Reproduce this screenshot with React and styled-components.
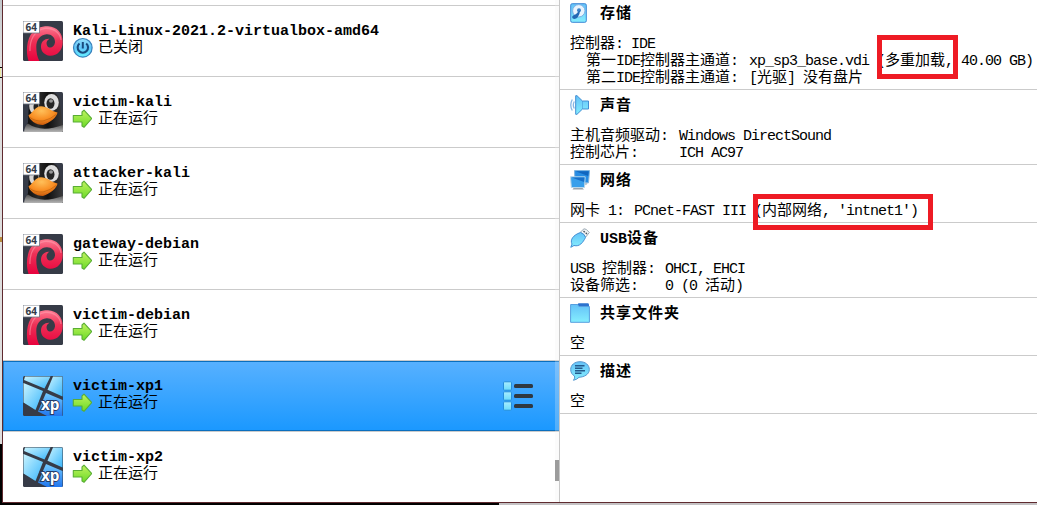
import React from "react";
import styled, { createGlobalStyle, css } from "styled-components";

const GlobalStyle = createGlobalStyle`
  *, *::before, *::after { box-sizing: border-box; }
  body { margin: 0; background: #fff; }
`;

const Desktop = styled.div`
  width: 1037px;
  height: 505px;
  overflow: hidden;
  padding: 0 0 2px 2px;
  background:
    linear-gradient(#000, #000) 0 444px / 3px 61px no-repeat,
    linear-gradient(#000, #000) 0 503px / 499px 2px no-repeat,
    linear-gradient(#000, #000) 0 67px / 2px 1px no-repeat,
    linear-gradient(#e9eaa5, #e9eaa5) 0 68px / 1px 9px no-repeat,
    linear-gradient(#000, #000) 0 77px / 2px 1px no-repeat,
    linear-gradient(#b78b3c, #b78b3c) 0 237px / 2px 5px no-repeat,
    linear-gradient(#c4c2c4, #c4c2c4) 499px 503px / 538px 2px no-repeat,
    linear-gradient(#c3c8cc 0, #dedede 60px, #dedede 444px);
`;

const Window = styled.main`
  display: flex;
  height: 503px;
  overflow: hidden;
  border-left: 1px solid #5f2a2f;
  border-bottom: 1px solid #5f2a2f;
  background: #fff;
  color: #000;
  font-family: "Noto Sans CJK SC", sans-serif;
  font-size: 15px;
`;

const Latin = styled.span`
  font-family: "Liberation Mono", monospace;
  letter-spacing: ${(p) => (p.$bold ? 0 : "-1px")};
`;
const Han = styled.span`
  font-weight: ${(p) => (p.$bold ? 700 : 400)};
  letter-spacing: ${(p) => (p.$bold ? "1px" : 0)};
`;

/* Splits a string into Latin and Chinese runs so each keeps its fixed advance. */
function Mixed({ children, bold }) {
  return children
    .split(/([\u3400-\u9fff]+)/)
    .filter(Boolean)
    .map((run, i) =>
      /[\u3400-\u9fff]/.test(run) ? (
        <Han key={i} $bold={bold}>{run}</Han>
      ) : (
        <Latin key={i} $bold={bold}>{run}</Latin>
      )
    );
}

const Sidebar = styled.div`
  display: flex;
  flex: none;
  flex-direction: column;
  position: relative;
  width: 557px;
  border-right: 1px solid #c8c8c8;
  padding-top: 5px;
`;
const MachineList = styled.ul`
  list-style: none;
  margin: 0;
  padding: 0;
  border-top: 1px solid #cbcbcb;
`;
const MachineRow = styled.li`
  display: flex;
  align-items: flex-start;
  height: 71px;
  padding: 15px 25px 0 20px;
  border-bottom: 1px solid #cbcbcb;
  ${(p) => p.$last && css`border-bottom: 0;`}
  ${(p) =>
    p.$selected &&
    css`
      background: linear-gradient(#58b1ff, #1a98ff) padding-box;
      box-shadow: inset 0 1px #0a6ebd, inset 0 -1px #0a6ebd, inset 1px 0 #1c7fcb;
    `}
`;
const MachineText = styled.div`
  flex: 1;
  margin-left: 9px;
`;
const MachineName = styled.div`
  height: 17px;
  padding-left: 1px;
  font-family: "Liberation Mono", monospace;
  line-height: 21px;
  font-weight: 700;
  white-space: pre;
`;
const MachineState = styled.div`
  display: flex;
  gap: 6px;
  height: 20px;
  line-height: 15px;
  white-space: pre;
`;
const MenuButton = styled.button`
  display: block;
  width: 32px;
  height: 32px;
  margin: 4px 0 0;
  padding: 0;
  border: 0;
  background: none;
`;
const ScrollTrack = styled.div`
  position: absolute;
  top: 0;
  right: 0;
  bottom: 0;
  width: 4px;
  padding-top: 460px;
  background: rgba(240, 240, 240, 0.25);
`;
const ScrollThumb = styled.div`
  height: 21px;
  background: #9c9c9c;
`;

const Details = styled.div`
  flex: 1;
  min-width: 0;
  margin-top: -2px;
`;
const Section = styled.section`
  padding: 5px 0 5px 10px;
  border-bottom: 1px solid #cbcbcb;
`;
const SectionHeader = styled.header`
  display: flex;
  gap: 10px;
  height: 20px;
  margin-bottom: 10px;
`;
const SectionTitle = styled.h2`
  margin: 0;
  font-size: 15px;
  line-height: 17px;
  white-space: pre;
`;
const Line = styled.div`
  display: flex;
  height: 17px;
  line-height: 17px;
  padding-left: ${(p) => (p.$indent ? 16 : 0)}px;
  white-space: pre;
`;
const Label = styled.span`
  flex: none;
  width: ${(p) => (p.$width ? `${p.$width}px` : "auto")};
`;
const Value = styled.span`
  flex: none;
`;
const Highlight = styled.div`
  position: absolute;
  left: ${(p) => p.$x}px;
  top: ${(p) => p.$y}px;
  width: ${(p) => p.$w}px;
  height: ${(p) => p.$h}px;
  border: 5px solid #ee1b24;
`;
const Icon = styled.svg`
  display: block;
  flex: none;
`;

function Badge64() {
  return (
    <g>
      <path d="M0 0H16.500V12H0Z" fill="#fff" stroke="#6d7480" strokeWidth=".8" />
      <text x="2.6" y="9.8" fontFamily="Open Sans, sans-serif" fontSize="10" fontWeight="700" fill="#333b49">64</text>
    </g>
  );
}

function DebianIcon() {
  return (
    <Icon width="40" height="40" viewBox="0 0 40 40">
      <defs>
        <linearGradient id="swirl" x1="0" y1="0" x2="0" y2="1">
          <stop offset="0" stopColor="#ff7a92" />
          <stop offset=".4" stopColor="#ee3257" />
          <stop offset="1" stopColor="#e7003c" />
        </linearGradient>
        <clipPath id="osClip"><rect width="40" height="40" rx="1.5" /></clipPath>
      </defs>
      <g clipPath="url(#osClip)">
        <rect width="40" height="40" fill="#363b47" />
        <path
          d="M6 41C3 34 3 22 7.500 14C12 7.500 18 5.200 25 5.300C34 5.800 39.700 12 39.700 21C39.700 29.500 34 35 27 34.800C21 34.500 17.500 29.500 18 25C18.400 20.500 21.500 17.500 26.500 17.800C23.500 19.500 22.800 22.500 24.300 25C26.500 28 31.200 26.500 32 21.500C32.300 16.500 28.500 13 23.500 13.300C17 13.800 13.300 19 13.300 26C13.300 32 14.500 37 17 41Z"
          fill="url(#swirl)"
        />
        <path d="M7 30C6.500 20 11 9 22 7.300C31 6.800 37 12 38 19" fill="none" stroke="#ffa2b2" strokeOpacity=".5" strokeWidth="1.3" />
      </g>
      <Badge64 />
    </Icon>
  );
}

function TuxIcon() {
  return (
    <Icon width="40" height="40" viewBox="0 0 40 40">
      <defs>
        <radialGradient id="beak" cx=".45" cy=".25" r=".75">
          <stop offset="0" stopColor="#ffc05a" />
          <stop offset=".6" stopColor="#f88d22" />
          <stop offset="1" stopColor="#c4580c" />
        </radialGradient>
        <linearGradient id="tuxHead">
          <stop offset="0" stopColor="#080808" />
          <stop offset=".35" stopColor="#2b2b2b" />
          <stop offset=".6" stopColor="#101010" />
          <stop offset="1" stopColor="#3c3c3e" />
        </linearGradient>
        <linearGradient id="tuxBelly" x1="0" y1="0" x2="0" y2="1">
          <stop offset="0" stopColor="#4a4a4a" />
          <stop offset="1" stopColor="#b5b5b5" />
        </linearGradient>
        <clipPath id="tuxClip"><rect width="40" height="40" rx="1.5" /></clipPath>
      </defs>
      <g clipPath="url(#tuxClip)">
        <rect width="40" height="40" fill="#363b47" />
        <path d="M6 10Q7-2 20-2Q37-2 37 12L40 34V40H2L5 30Z" fill="url(#tuxHead)" />
        <path d="M1 40Q2 33 5 31.500Q18 41 40 33V40Z" fill="url(#tuxBelly)" />
        <ellipse cx="11" cy="14" rx="4.800" ry="7.500" fill="#d6d6d6" />
        <ellipse cx="28.500" cy="10.500" rx="7.300" ry="8.500" fill="#dedede" />
        <ellipse cx="27.500" cy="11.500" rx="4" ry="5.200" fill="#252525" />
        <ellipse cx="28" cy="9" rx="2" ry="1.700" fill="#979797" />
        <ellipse cx="13" cy="15" rx="2.500" ry="4" fill="#222" />
        <path d="M5.500 23C9 22 12 14.200 18 14.200C24 14.200 28 19 34.500 20.500C34 25 27 31 20 33C13 33 6 28 5.500 23Z" fill="url(#beak)" />
        <path d="M7 25.500Q12 29.500 20 29Q28 27 33 22.500" fill="none" stroke="#c06510" strokeWidth=".7" />
      </g>
      <Badge64 />
    </Icon>
  );
}

function XpIcon() {
  return (
    <Icon width="40" height="40" viewBox="0 0 40 40">
      <defs>
        <linearGradient id="paneA" x1="0" y1="0" x2="1" y2="1">
          <stop offset="0" stopColor="#c9f4ff" />
          <stop offset="1" stopColor="#3bb6fb" />
        </linearGradient>
        <linearGradient id="paneB" x1="0" y1="0" x2="0" y2="1">
          <stop offset="0" stopColor="#72cbff" />
          <stop offset="1" stopColor="#2176ed" />
        </linearGradient>
        <clipPath id="xpClip"><rect width="40" height="40" rx="1.500" /></clipPath>
      </defs>
      <g clipPath="url(#xpClip)">
        <rect width="40" height="40" fill="#363b47" />
        <path d="M2 .5H27.500L21.500 12.500L1 4Z" fill="url(#paneA)" />
        <path d="M30 .5H39.500V20.500L24.500 13.800Z" fill="url(#paneA)" />
        <path d="M.5 7L20 15L12.500 34L.5 26.500Z" fill="url(#paneA)" />
        <path d="M23 17L39.500 24V40H24L15 35.500Z" fill="url(#paneB)" />
      </g>
      <text x="18" y="34" fontFamily="Open Sans, sans-serif" fontSize="16" fontWeight="700" fill="#fff" stroke="#243c67" strokeWidth="2" paintOrder="stroke" textLength="18.500" lengthAdjust="spacingAndGlyphs">xp</text>
    </Icon>
  );
}

function RunningIcon() {
  return (
    <Icon width="20" height="20" viewBox="0 0 20 20">
      <defs>
        <linearGradient id="run" x1="0" y1="0" x2="0" y2="1">
          <stop offset="0" stopColor="#c0f25f" />
          <stop offset="1" stopColor="#6bdb27" />
        </linearGradient>
      </defs>
      <path d="M1.300 6.500H10V3L12 1.200L19.800 9.500L12 18.300L10 17V13H1.300Z" fill="url(#run)" stroke="#59ad34" strokeWidth="1.100" strokeLinejoin="round" />
    </Icon>
  );
}

function PowerIcon() {
  return (
    <Icon width="20" height="20" viewBox="0 0 20 20" overflow="visible">
      <defs>
        <linearGradient id="power" x1="0" y1="0" x2="0" y2="1">
          <stop offset="0" stopColor="#93def9" />
          <stop offset=".5" stopColor="#62c6fa" />
          <stop offset="1" stopColor="#65f0ff" />
        </linearGradient>
      </defs>
      <circle cx="10.800" cy="9.800" r="9.300" fill="url(#power)" stroke="#3982bd" strokeWidth="1.200" />
      <path d="M7.500 5.500A5.200 5.200 0 1 0 14.200 5.500" fill="none" stroke="#194b7e" strokeWidth="2.100" />
      <path d="M10.800 4V10.500" stroke="#194b7e" strokeWidth="2" />
    </Icon>
  );
}

function MenuIcon() {
  return (
    <Icon width="32" height="32" viewBox="0 0 32 32">
      <defs>
        <linearGradient id="bullet" x1="0" y1="0" x2="0" y2="1">
          <stop offset="0" stopColor="#a8ecff" />
          <stop offset="1" stopColor="#6cdcfb" />
        </linearGradient>
      </defs>
      {[1.8, 11.8, 21.8].map((y) => (
        <g key={y}>
          <rect x="1.500" y={y} width="8" height="8.400" rx="1" fill="url(#bullet)" stroke="#278edb" strokeWidth="1" />
          <rect x="12" y={y + 2.2} width="19" height="4" rx="1.500" fill="#303841" />
        </g>
      ))}
    </Icon>
  );
}

function BlueFill({ id }) {
  return (
    <defs>
      <linearGradient id={id} x1="0" y1="0" x2="0" y2="1">
        <stop offset="0" stopColor="#64c2f8" />
        <stop offset="1" stopColor="#85eefe" />
      </linearGradient>
    </defs>
  );
}

const SectionIcons = {
  storage: (
    <Icon width="20" height="20" viewBox="0 0 20 20">
      <BlueFill id="disk" />
      <rect x=".7" y=".7" width="15.600" height="18.600" rx="1.500" fill="url(#disk)" stroke="#3d87d5" />
      <circle cx="8.800" cy="7.800" r="6.200" fill="#e9f4fd" stroke="#78aee5" />
      <circle cx="9" cy="7.300" r="2" fill="#3c83c9" />
      <path d="M10 7.500Q10 11.500 7.500 14.500C6 16.500 2 16.500 2.200 14C2.500 12 6 12 7.500 9.500Z" fill="#2368b4" />
    </Icon>
  ),
  sound: (
    <Icon width="20" height="20" viewBox="0 0 20 20">
      <BlueFill id="speaker" />
      <path d="M5.700 .7H7L12.500 6H18.500V14H12.500L7 19.300H5.700Z" fill="url(#speaker)" stroke="#428ed3" strokeLinejoin="round" />
      <path d="M12.500 6V14" stroke="#428ed3" strokeOpacity=".5" />
      <path d="M2.300 4.500Q-.8 10 2.300 15.500M4.300 6.500Q2.300 10 4.300 13.500" fill="none" stroke="#87b7e4" strokeWidth="1.300" />
    </Icon>
  ),
  network: (
    <Icon width="20" height="20" viewBox="0 0 20 20">
      <path d="M4.500 .6H19.500L18.500 12.800H5Z" fill="#258ce3" stroke="#7fb4de" />
      <path d="M5.500 1.200H18.800L18.200 6Z" fill="#1166be" />
      <path d="M15 13.300H17.500L16.500 14.800H15Z" fill="#aab4bd" />
      <path d="M4 17.500H12L14 19.500H2.500Z" fill="#9aa4ac" />
      <path d="M.5 6.800H15.200L14.500 17.500H1.300Z" fill="#379feb" stroke="#b9d7ea" />
      <path d="M1.500 7.500H14.500L14 12Z" fill="#1870c8" />
    </Icon>
  ),
  usb: (
    <Icon width="20" height="20" viewBox="0 0 20 20">
      <BlueFill id="plug" />
      <path d="M10.500 4L14 .8Q16 .2 19.300 4.500L15.800 9Z" fill="#f3f5f6" stroke="#9caab4" />
      <path d="M13.500 3L14.800 4.300M15.700 4.700L17 6" stroke="#4b5660" strokeWidth="1.300" />
      <path d="M.8 19.300L2 16C-.2 12 3 7 10.500 4.500Q15 6 15.500 9.500C13 14.500 9.500 19 4 17.500Z" fill="url(#plug)" stroke="#428ed3" />
    </Icon>
  ),
  folder: (
    <Icon width="20" height="20" viewBox="0 0 20 20">
      <BlueFill id="folder" />
      <path d="M7.500 4V1.500Q8 .3 9 .3H18Q19 .5 19 2V6H8Z" fill="#2c73ce" />
      <path d="M.6 1.500H7.500L9 3.500H19.400V19.300H.6Z" fill="url(#folder)" stroke="#579fdf" />
    </Icon>
  ),
  description: (
    <Icon width="20" height="20" viewBox="0 0 20 20">
      <BlueFill id="bubble" />
      <path d="M10 .7C15.500 .7 19.300 4 19.300 8.500C19.300 13.500 14 16 9 16.300Q7 18.500 3.500 19.300Q5.200 17 4.500 15C2 13.500 .7 11.500 .7 8.500C.7 4 4.500 .7 10 .7Z" fill="url(#bubble)" stroke="#5597cf" />
      <path d="M5 4.700H14.500M5 7.200H12.500M5 9.700H15M5 12.200H11.500" stroke="#245b8c" strokeWidth="1.400" />
    </Icon>
  ),
};

const osIcons = { debian: DebianIcon, tux: TuxIcon, xp: XpIcon };

const machines = [
  { name: "Kali-Linux-2021.2-virtualbox-amd64", os: "debian", off: true },
  { name: "victim-kali", os: "tux" },
  { name: "attacker-kali", os: "tux" },
  { name: "gateway-debian", os: "debian" },
  { name: "victim-debian", os: "debian" },
  { name: "victim-xp1", os: "xp", selected: true },
  { name: "victim-xp2", os: "xp" },
];

const sections = [
  {
    icon: "storage",
    title: "存储",
    lines: [
      { label: "控制器: ", value: "IDE" },
      { label: "第一IDE控制器主通道:", value: "xp_sp3_base.vdi (多重加载, 40.00 GB)", width: 163, indent: true },
      { label: "第二IDE控制器主通道:", value: "[光驱] 没有盘片", width: 163, indent: true },
    ],
  },
  {
    icon: "sound",
    title: "声音",
    lines: [
      { label: "主机音频驱动:", value: "Windows DirectSound", width: 109 },
      { label: "控制芯片:", value: "ICH AC97", width: 109 },
    ],
  },
  { icon: "network", title: "网络", lines: [{ label: "网卡 1:", value: "PCnet-FAST III (内部网络, 'intnet1')", width: 64 }] },
  {
    icon: "usb",
    title: "USB设备",
    lines: [
      { label: "USB 控制器:", value: "OHCI, EHCI", width: 95 },
      { label: "设备筛选:", value: "0 (0 活动)", width: 95 },
    ],
  },
  { icon: "folder", title: "共享文件夹", lines: [{ label: "空" }] },
  { icon: "description", title: "描述", lines: [{ label: "空" }] },
];

function Machine({ machine, last }) {
  const OsIcon = osIcons[machine.os];
  return (
    <MachineRow $selected={machine.selected} $last={last}>
      <OsIcon />
      <MachineText>
        <MachineName>{machine.name}</MachineName>
        <MachineState>
          {machine.off ? <PowerIcon /> : <RunningIcon />}
          <span><Mixed>{machine.off ? "已关闭" : "正在运行"}</Mixed></span>
        </MachineState>
      </MachineText>
      {machine.selected && <MenuButton aria-label="menu"><MenuIcon /></MenuButton>}
    </MachineRow>
  );
}

export default function App() {
  return (
    <Desktop>
      <GlobalStyle />
      <Window>
        <Sidebar>
          <MachineList>
            {machines.map((m, i) => (
              <Machine key={m.name} machine={m} last={i === machines.length - 1} />
            ))}
          </MachineList>
          <ScrollTrack><ScrollThumb /></ScrollTrack>
        </Sidebar>
        <Details>
          {sections.map((s) => (
            <Section key={s.title}>
              <SectionHeader>
                {SectionIcons[s.icon]}
                <SectionTitle><Mixed bold>{s.title}</Mixed></SectionTitle>
              </SectionHeader>
              {s.lines.map((l, i) => (
                <Line key={i} $indent={l.indent}>
                  <Label $width={l.width}><Mixed>{l.label}</Mixed></Label>
                  {l.value && <Value><Mixed>{l.value}</Mixed></Value>}
                </Line>
              ))}
            </Section>
          ))}
        </Details>
      </Window>
      <Highlight $x={877} $y={35} $w={81} $h={44} />
      <Highlight $x={753} $y={194} $w={180} $h={36} />
    </Desktop>
  );
}
